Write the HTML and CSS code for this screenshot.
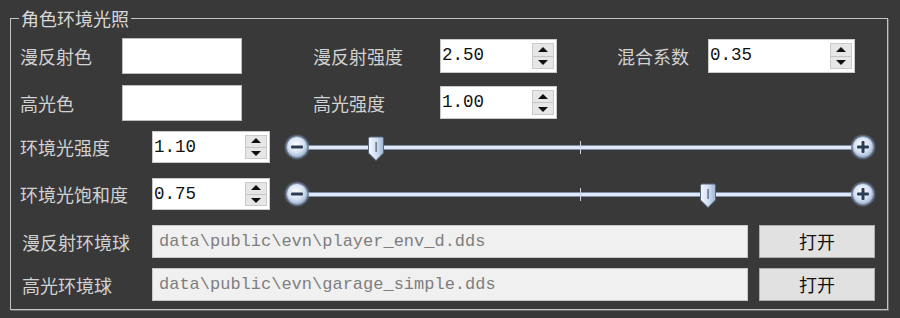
FILE: index.html
```html
<!DOCTYPE html>
<html>
<head>
	<meta charset="UTF-8">
	<title>角色环境光照</title>
	<link rel="stylesheet" href="styles.css">
</head>
<body>

<div class="group">
	<div class="group-title">角色环境光照</div>

	<!-- 颜色和强度 -->
	<div class="row row1">
		<span class="label w-color">漫反射色</span>
		<div class="swatch"></div>
		<span class="label w-mid">漫反射强度</span>
		<div class="spin w-spin"><span class="spin-val">2.50</span><span class="spin-btns"><i class="up"></i><i class="down"></i></span></div>
		<span class="label w-mix">混合系数</span>
		<div class="spin w-spin-wide"><span class="spin-val">0.35</span><span class="spin-btns"><i class="up"></i><i class="down"></i></span></div>
	</div>

	<div class="row row2">
		<span class="label w-color">高光色</span>
		<div class="swatch"></div>
		<span class="label w-mid">高光强度</span>
		<div class="spin w-spin"><span class="spin-val">1.00</span><span class="spin-btns"><i class="up"></i><i class="down"></i></span></div>
	</div>

	<!-- 滑块 -->
	<div class="row row3">
		<span class="label w-long">环境光强度</span>
		<div class="spin w-spin-s"><span class="spin-val">1.10</span><span class="spin-btns"><i class="up"></i><i class="down"></i></span></div>
		<div class="slider">
			<svg class="round-btn" width="26" height="26" viewBox="0 0 26 26"><use href="#btn-bg"/><rect x="7" y="11.5" width="12" height="3" rx="1" fill="#2d3c55"/></svg>
			<div class="track">
				<span class="tick"></span>
				<svg class="handle" style="left:12.3%" width="18" height="26" viewBox="0 0 18 26"><use href="#handle"/></svg>
			</div>
			<svg class="round-btn" width="26" height="26" viewBox="0 0 26 26"><use href="#btn-bg"/><rect x="7" y="11.5" width="12" height="3" rx="1" fill="#2d3c55"/><rect x="11.5" y="7" width="3" height="12" rx="1" fill="#2d3c55"/></svg>
		</div>
	</div>

	<div class="row row4">
		<span class="label w-long">环境光饱和度</span>
		<div class="spin w-spin-s"><span class="spin-val">0.75</span><span class="spin-btns"><i class="up"></i><i class="down"></i></span></div>
		<div class="slider">
			<svg class="round-btn" width="26" height="26" viewBox="0 0 26 26"><use href="#btn-bg"/><rect x="7" y="11.5" width="12" height="3" rx="1" fill="#2d3c55"/></svg>
			<div class="track">
				<span class="tick"></span>
				<svg class="handle" style="left:73.7%" width="18" height="26" viewBox="0 0 18 26"><use href="#handle"/></svg>
			</div>
			<svg class="round-btn" width="26" height="26" viewBox="0 0 26 26"><use href="#btn-bg"/><rect x="7" y="11.5" width="12" height="3" rx="1" fill="#2d3c55"/><rect x="11.5" y="7" width="3" height="12" rx="1" fill="#2d3c55"/></svg>
		</div>
	</div>

	<!-- 环境球 -->
	<div class="row row5">
		<span class="label w-long label-file">漫反射环境球</span>
		<div class="file-box">data\public\evn\player_env_d.dds</div>
		<div class="btn">打开</div>
	</div>

	<div class="row row6">
		<span class="label w-long label-file">高光环境球</span>
		<div class="file-box">data\public\evn\garage_simple.dds</div>
		<div class="btn">打开</div>
	</div>
</div>

<svg width="0" height="0" class="defs">
	<defs>
		<radialGradient id="btnGrad" cx="45%" cy="40%" r="60%">
			<stop offset="0" stop-color="#ffffff"/>
			<stop offset="0.6" stop-color="#d7e3f3"/>
			<stop offset="1" stop-color="#9fb3cf"/>
		</radialGradient>
		<linearGradient id="handleGrad" x1="0" y1="0" x2="1" y2="0">
			<stop offset="0" stop-color="#f4f8fd"/>
			<stop offset="0.5" stop-color="#d3e1f3"/>
			<stop offset="1" stop-color="#9fb6d6"/>
		</linearGradient>
		<g id="btn-bg">
			<circle cx="13" cy="13" r="12.5" fill="#56606e"/>
			<circle cx="13" cy="13" r="10.5" fill="url(#btnGrad)" stroke="#7f93b1" stroke-width="1"/>
		</g>
		<g id="handle">
			<path d="M1.5 2.5 Q1.5 1 3 1 H15 Q16.5 1 16.5 2.5 V17 L9 24.5 L1.5 17 Z" fill="url(#handleGrad)" stroke="#56677f" stroke-width="1"/>
			<rect x="8.5" y="6" width="1.2" height="10" fill="#4a5a72"/>
		</g>
	</defs>
</svg>

</body>
</html>
```

FILE: styles.css
```css
html, body {
	margin: 0;
	height: 100%;
	overflow: hidden;
}

body {
	background-color: #393939;
	font-family: "Noto Sans CJK SC", "Noto Sans", sans-serif;
	color: #d2d2d2;
}

.defs {
	position: absolute;
}

/* 外框 */
.group {
	position: relative;
	margin: 18px 12px 0 10px;
	height: 290px;
	border: 1px solid #c4c4c4;
	box-shadow: 1px 1px 0 #6a6a6a;
}

.group-title {
	position: absolute;
	top: -12px;
	left: 8px;
	padding: 0 2px;
	background-color: #393939;
	font-size: 18px;
	line-height: 22px;
	color: #d8d8d8;
}

/* 行 */
.row {
	display: flex;
	align-items: center;
}

.row1 { margin-top: 19px; height: 36px; }
.row2 { margin-top: 11px; height: 35px; }
.row3 { margin-top: 11px; height: 32px; }
.row4 { margin-top: 15px; height: 32px; }
.row5 { margin-top: 15px; height: 33px; }
.row6 { margin-top: 10px; height: 33px; }

.label {
	font-size: 18px;
	line-height: 22px;
	white-space: nowrap;
	box-sizing: border-box;
}

.w-color { width: 111px; padding-left: 9px; }
.w-mid { width: 127px; margin-left: 71px; }
.w-mix { width: 91px; margin-left: 60px; }
.w-long { width: 141px; padding-left: 9px; }
.label-file { padding-left: 11px; }

.swatch {
	width: 118px;
	height: 34px;
	background-color: #ffffff;
	border: 1px solid #bdbdbd;
}

/* 数值框 */
.spin {
	display: flex;
	align-items: stretch;
	box-sizing: border-box;
	height: 34px;
	background-color: #ffffff;
	border: 1px solid #c9c9c9;
}

.row2 .spin { height: 33px; }
.row3 .spin, .row4 .spin { height: 32px; }

.w-spin { width: 117px; }
.w-spin-wide { width: 147px; }
.w-spin-s { width: 118px; }

.spin-val {
	flex: 1;
	font-family: "Liberation Mono", monospace;
	font-size: 17.5px;
	line-height: 30px;
	color: #111111;
	padding-left: 1px;
}

.spin-btns {
	display: flex;
	flex-direction: column;
	width: 20px;
	margin: 3px 2px 3px 0;
	border: 1px solid #cacaca;
}

.spin-btns i {
	flex: 1;
	position: relative;
	background-color: #e6e6e6;
}

.spin-btns i.up {
	border-bottom: 1px solid #c4c4c4;
}

.spin-btns i::after {
	content: "";
	position: absolute;
	left: 50%;
	top: 50%;
	margin-left: -5px;
	border-left: 5px solid transparent;
	border-right: 5px solid transparent;
}

.spin-btns i.up::after {
	margin-top: -3px;
	border-bottom: 5px solid #111111;
}

.spin-btns i.down::after {
	margin-top: -2px;
	border-top: 5px solid #111111;
}

/* 滑块 */
.slider {
	display: flex;
	align-items: center;
	margin-left: 14px;
	width: 592px;
}

.round-btn {
	flex: none;
	display: block;
}

.track {
	position: relative;
	flex: 1;
	height: 3px;
	margin: 0 -1px;
	background-color: #e0e9f5;
	box-shadow: 0 0 0 1px #7d8ea8;
}

.tick {
	position: absolute;
	left: 50%;
	top: -5px;
	width: 1px;
	height: 13px;
	background-color: #c9d6e8;
}

.handle {
	position: absolute;
	top: -10px;
	margin-left: -9px;
}

/* 文件 */
.file-box {
	box-sizing: border-box;
	width: 596px;
	height: 33px;
	padding-left: 6px;
	background-color: #f0f0f0;
	border: 1px solid #c8c8c8;
	font-family: "Liberation Mono", monospace;
	font-size: 17px;
	line-height: 31px;
	color: #7e7e7e;
	white-space: nowrap;
	overflow: hidden;
}

.btn {
	box-sizing: border-box;
	width: 116px;
	height: 33px;
	margin-left: 11px;
	background-color: #e1e1e1;
	border: 1px solid #adadad;
	color: #111111;
	font-size: 18px;
	line-height: 31px;
	text-align: center;
}
```
